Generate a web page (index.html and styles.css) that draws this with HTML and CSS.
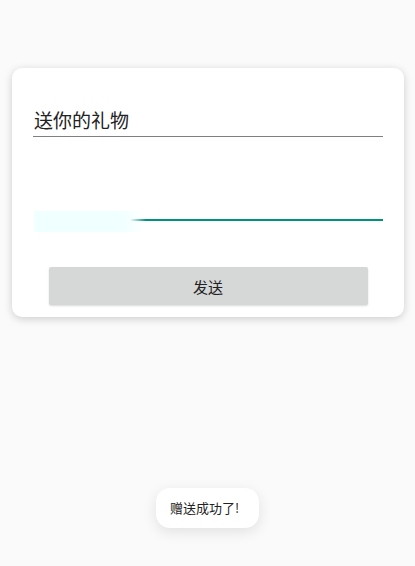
FILE: index.html
```html
<!DOCTYPE html>
<html lang="zh">
<head>
  <meta charset="UTF-8">
  <meta name="viewport" content="width=device-width, initial-scale=1.0">
  <title>送礼</title>
  <link rel="stylesheet" href="styles.css">
</head>
<body>
  <div class="card">
    <div class="gift-field">送你的礼物</div>
    <div class="progress">
      <div class="glow"></div>
      <div class="line"></div>
    </div>
    <button class="btn" type="button">发送</button>
  </div>
  <div class="toast">赠送成功了!</div>
</body>
</html>
```

FILE: styles.css
```css
body { font-family: "Noto Sans CJK SC", "Noto Sans", sans-serif; margin: 0; padding: 0; background: #fafafa; height: 566px; position: relative; }
.card { margin: 68px 11px 0 12px; background: #fff; border-radius: 10px; box-shadow: 0 2px 8px rgba(0,0,0,0.18); padding: 36px 21px 12px 21px; height: 201px; }
.gift-field { font-size: 19px; color: #222; line-height: 32px; border-bottom: 1px solid #808080; padding-left: 1px; }
.progress { position: relative; margin: 74px 0 0 1px; height: 21px; }
.glow { position: absolute; left: 0; top: 0; width: 110px; height: 21px; background: linear-gradient(to right, #f0ffff 80%, rgba(240,255,255,0)); }
.line { position: absolute; left: 0; right: 0; top: 8px; height: 2px; background: linear-gradient(to right, rgba(0,150,136,0) 96px, #00917f 112px); }
.btn { display: block; margin: 35px auto 0; width: 319px; height: 38px; background: #d6d7d7; border: none; border-radius: 2px; box-shadow: 0 1px 2px rgba(0,0,0,0.15); font-family: inherit; font-size: 15px; color: #222; }
.toast { position: absolute; left: 156px; top: 488px; width: 103px; height: 40px; box-sizing: border-box; background: #fff; border-radius: 14px; box-shadow: 0 4px 14px rgba(0,0,0,0.1); font-size: 13px; color: #222; line-height: 40px; padding-left: 14px; }
```
